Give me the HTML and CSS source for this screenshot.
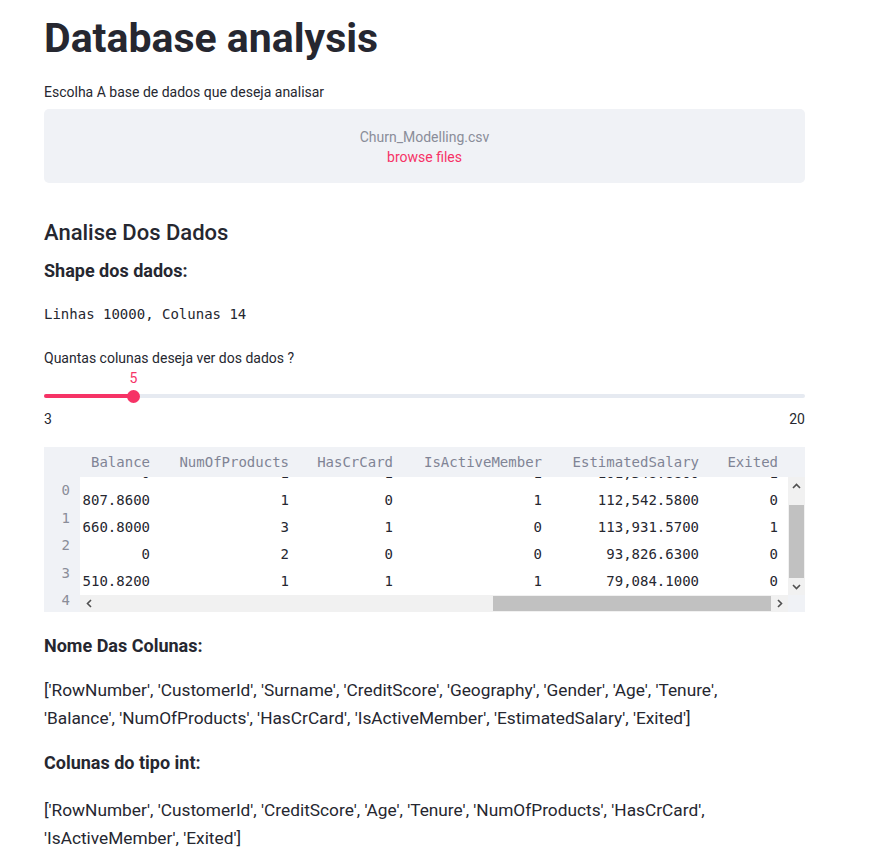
FILE: index.html
```html
<!DOCTYPE html>
<html lang="pt">
<head>
<meta charset="utf-8">
<title>Database analysis</title>
<link rel="stylesheet" href="styles.css">
</head>
<body>
<main class="page">
  <h1 class="title">Database analysis</h1>

  <div class="label uploader-label">Escolha A base de dados que deseja analisar</div>
  <div class="uploader">
    <div class="file-name">Churn_Modelling.csv</div>
    <div class="browse">browse files</div>
  </div>

  <h2 class="section">Analise Dos Dados</h2>
  <div class="bold-label shape-label">Shape dos dados:</div>
  <div class="mono-out">Linhas 10000, Colunas 14</div>

  <div class="label slider-label">Quantas colunas deseja ver dos dados ?</div>
  <div class="slider">
    <div class="slider-value-row"><span class="slider-value" style="left:11.76%">5</span></div>
    <div class="slider-track-area">
      <div class="track">
        <div class="track-fill" style="width:11.76%"></div>
        <div class="thumb" style="left:11.76%"></div>
      </div>
    </div>
    <div class="slider-ticks"><span>3</span><span>20</span></div>
  </div>

  <div class="df">
    <div class="df-index">
      <div class="df-corner"></div>
      <div class="df-idx">0</div>
      <div class="df-idx">1</div>
      <div class="df-idx">2</div>
      <div class="df-idx">3</div>
      <div class="df-idx">4</div>
    </div>
    <div class="df-main">
      <div class="df-head">
        <table class="cols">
          <colgroup>
            <col class="c-bal"><col class="c-nop"><col class="c-hcc"><col class="c-iam"><col class="c-est"><col class="c-ext">
          </colgroup>
          <tr>
            <th>Balance</th><th>NumOfProducts</th><th>HasCrCard</th><th>IsActiveMember</th><th>EstimatedSalary</th><th>Exited</th>
          </tr>
        </table>
      </div>
      <div class="df-bodyrow">
        <div class="df-body">
          <table class="cols rows">
            <colgroup>
              <col class="c-bal"><col class="c-nop"><col class="c-hcc"><col class="c-iam"><col class="c-est"><col class="c-ext">
            </colgroup>
            <tr><td>0</td><td>1</td><td>1</td><td>1</td><td>101,348.8800</td><td>1</td></tr>
            <tr><td>807.8600</td><td>1</td><td>0</td><td>1</td><td>112,542.5800</td><td>0</td></tr>
            <tr><td>660.8000</td><td>3</td><td>1</td><td>0</td><td>113,931.5700</td><td>1</td></tr>
            <tr><td>0</td><td>2</td><td>0</td><td>0</td><td>93,826.6300</td><td>0</td></tr>
            <tr><td>510.8200</td><td>1</td><td>1</td><td>1</td><td>79,084.1000</td><td>0</td></tr>
          </table>
        </div>
        <div class="vscroll">
          <div class="sb-btn"><svg width="9" height="6" viewBox="0 0 9 6"><polyline points="1,5 4.5,1.5 8,5" class="chev"/></svg></div>
          <div class="sb-track-v"><div class="sb-thumb-v"></div></div>
          <div class="sb-btn"><svg width="9" height="6" viewBox="0 0 9 6"><polyline points="1,1 4.5,4.5 8,1" class="chev"/></svg></div>
        </div>
      </div>
      <div class="df-hscrollrow">
        <div class="hscroll">
          <div class="sb-btn"><svg width="6" height="9" viewBox="0 0 6 9"><polyline points="5,1 1.5,4.5 5,8" class="chev"/></svg></div>
          <div class="sb-track-h"><div class="sb-thumb-h"></div></div>
          <div class="sb-btn"><svg width="6" height="9" viewBox="0 0 6 9"><polyline points="1,1 4.5,4.5 1,8" class="chev"/></svg></div>
        </div>
        <div class="sb-corner"></div>
      </div>
    </div>
  </div>

  <div class="bold-label cols-label">Nome Das Colunas:</div>
  <p class="list">['RowNumber', 'CustomerId', 'Surname', 'CreditScore', 'Geography', 'Gender', 'Age', 'Tenure', 'Balance', 'NumOfProducts', 'HasCrCard', 'IsActiveMember', 'EstimatedSalary', 'Exited']</p>

  <div class="bold-label int-label">Colunas do tipo int:</div>
  <p class="list list-int">['RowNumber', 'CustomerId', 'CreditScore', 'Age', 'Tenure', 'NumOfProducts', 'HasCrCard', 'IsActiveMember', 'Exited']</p>
</main>
</body>
</html>
```

FILE: styles.css
```css
html, body {
  margin: 0;
  padding: 0;
  background: #ffffff;
}

body {
  color: #262730;
  font-family: Roboto, "Liberation Sans", sans-serif;
}

.page {
  width: 761px;
  padding: 14px 0 40px 44px;
}

.title {
  margin: 0;
  font-size: 41px;
  font-weight: 700;
  line-height: 48px;
  color: #262730;
}

.label {
  font-size: 14px;
  line-height: 20px;
}

.uploader-label {
  margin-top: 20px;
}

.uploader {
  margin-top: 7px;
  height: 74px;
  box-sizing: border-box;
  padding-top: 18px;
  background: #f0f2f6;
  border-radius: 5px;
  text-align: center;
  font-size: 14px;
  line-height: 20px;
}

.file-name {
  color: #8a8d99;
}

.browse {
  color: #f63366;
}

.section {
  margin: 35px 0 0;
  font-size: 22px;
  font-weight: 500;
  line-height: 30px;
}

.bold-label {
  font-size: 18px;
  font-weight: 700;
  line-height: 26px;
}

.shape-label {
  margin-top: 10px;
}

.mono-out {
  margin-top: 20px;
  font-family: "DejaVu Sans Mono", "Liberation Mono", monospace;
  font-size: 14px;
  line-height: 20px;
}

.slider-label {
  margin-top: 24px;
}

.slider-value-row {
  position: relative;
  height: 19px;
}

.slider-value {
  position: absolute;
  top: 0;
  transform: translateX(-50%);
  font-size: 14px;
  line-height: 20px;
  color: #f63366;
}

.slider-track-area {
  padding-top: 7px;
  height: 15px;
}

.track {
  position: relative;
  height: 4px;
  border-radius: 2px;
  background: #e6eaf1;
}

.track-fill {
  height: 4px;
  border-radius: 2px;
  background: #f63366;
}

.thumb {
  position: absolute;
  top: -4.5px;
  width: 13px;
  height: 13px;
  margin-left: -6.5px;
  border-radius: 50%;
  background: #f63366;
}

.slider-ticks {
  display: flex;
  justify-content: space-between;
  font-size: 14px;
  line-height: 20px;
}

/* dataframe */
.df {
  margin-top: 18px;
  display: flex;
  height: 165px;
  font-family: "DejaVu Sans Mono", "Liberation Mono", monospace;
  font-size: 14px;
}

.df-index {
  flex: none;
  width: 36px;
  background: #f0f2f6;
  overflow: hidden;
}

.df-corner {
  height: 30px;
}

.df-idx {
  height: 27.5px;
  line-height: 27.5px;
  padding-right: 10px;
  text-align: right;
  color: #8a8d99;
}

.df-main {
  flex: 1;
  min-width: 0;
  display: flex;
  flex-direction: column;
}

.df-head {
  flex: none;
  height: 30px;
  overflow: hidden;
  background: #f0f2f6;
}

.cols {
  border-collapse: collapse;
  table-layout: fixed;
  width: 706px;
}

.c-bal { width: 78px; }
.c-nop { width: 139px; }
.c-hcc { width: 104px; }
.c-iam { width: 149px; }
.c-est { width: 157px; }
.c-ext { width: 79px; }

.cols th,
.cols td {
  padding: 0 8px 0 0;
  text-align: right;
  white-space: nowrap;
}

.cols th {
  height: 30px;
  line-height: 30px;
  font-weight: 400;
  color: #808495;
}

.df-bodyrow {
  flex: none;
  display: flex;
  height: 118px;
}

.df-body {
  flex: 1;
  min-width: 0;
  overflow: hidden;
  background: #ffffff;
}

.rows {
  margin-top: -17px;
}

.rows td {
  height: 27px;
  line-height: 27px;
  color: #262730;
}

.vscroll {
  flex: none;
  width: 17px;
  display: flex;
  flex-direction: column;
  background: #f1f1f1;
}

.sb-btn {
  flex: none;
  width: 17px;
  height: 17px;
  display: flex;
  align-items: center;
  justify-content: center;
}

.chev {
  fill: none;
  stroke: #505050;
  stroke-width: 1.6;
}

.sb-track-v {
  flex: 1;
  padding: 11px 1px 0;
}

.sb-thumb-v {
  height: 73px;
  background: #c1c1c1;
}

.df-hscrollrow {
  flex: none;
  display: flex;
  height: 17px;
}

.hscroll {
  flex: 1;
  display: flex;
  background: #f1f1f1;
}

.sb-track-h {
  flex: 1;
  display: flex;
  justify-content: flex-end;
  padding: 1px 0;
}

.sb-thumb-h {
  width: 278px;
  background: #c1c1c1;
}

.sb-corner {
  flex: none;
  width: 17px;
  background: #f0f2f6;
}

.cols-label {
  margin-top: 21px;
}

.int-label {
  margin-top: 18px;
}

.list {
  margin: 17px 0 0;
  max-width: 725px;
  font-size: 17.3px;
  line-height: 28px;
}

.list-int {
  margin-top: 20px;
}
```
